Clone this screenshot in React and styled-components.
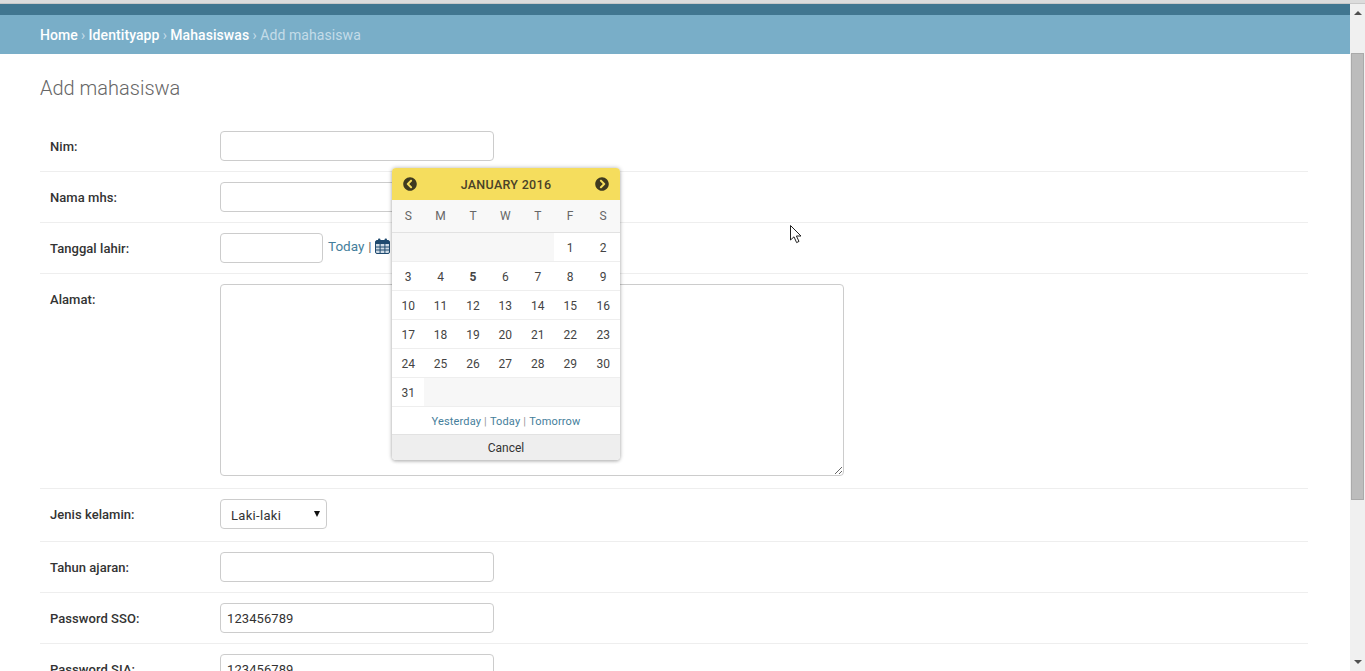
import React from 'react';
import styled, { createGlobalStyle } from 'styled-components';
import { FaChevronCircleLeft, FaChevronCircleRight } from 'react-icons/fa';

const Global = createGlobalStyle`
  html, body { margin: 0; padding: 0; height: 100%; overflow: hidden; }
  body { font-family: Roboto, "Liberation Sans", sans-serif; font-size: 14px; color: #333; background: #fff; }
`;

const Page = styled.div`
  position: relative;
  display: flex;
  flex-direction: column;
  height: 671px;
  overflow: hidden;
`;
const TopEdge = styled.div`
  height: 3px;
  background: #dcdcdc;
  border-bottom: 1px solid #c8c8c8;
  flex: none;
`;
const Body = styled.div`
  display: flex;
  flex: 1;
  min-height: 0;
`;
const Main = styled.div`
  flex: 1;
  min-width: 0;
  overflow: hidden;
`;
const Header = styled.div`
  height: 11px;
  background: #417690;
`;
const Breadcrumbs = styled.div`
  height: 39px;
  padding-left: 40px;
  display: flex;
  align-items: center;
  gap: 3.2px;
  background: #79aec8;
  color: #c4dce8;
  font-size: 14px;
  letter-spacing: 0.08px;
  a { color: #fff; font-weight: 500; text-decoration: none; }
`;
const Content = styled.div`
  padding: 22px 42px 0 40px;
`;
const Title = styled.h1`
  margin: 0 0 21px;
  font-size: 20px;
  line-height: 24px;
  font-weight: 300;
  color: #666;
`;
const Row = styled.div`
  display: flex;
  align-items: flex-start;
  padding: 10px 10px ${p => p.$bottom || 10}px;
  border-bottom: 1px solid #eee;
`;
const Label = styled.label`
  width: 170px;
  flex: none;
  padding-top: 7px;
  font-size: 13px;
  line-height: 18px;
  letter-spacing: 0.05px;
  font-weight: 500;
  color: #333;
`;
const TextInput = styled.input`
  box-sizing: border-box;
  width: ${p => p.$width || 274}px;
  height: 30px;
  padding: 0 6px;
  border: 1px solid #ccc;
  border-radius: 4px;
  background: #fff;
  font: 13px Roboto, sans-serif;
  letter-spacing: 0.07px;
  color: #333;
`;
const Area = styled.textarea`
  box-sizing: border-box;
  display: block;
  width: 624px;
  height: 192px;
  border: 1px solid #ccc;
  border-radius: 4px;
  background: #fff;
`;
const SelectWrap = styled.div`
  position: relative;
  width: 107px;
  height: 30px;
  &::after {
    content: '';
    position: absolute;
    top: 12px;
    right: 7px;
    border-left: 3px solid transparent;
    border-right: 3px solid transparent;
    border-top: 6px solid #111;
  }
`;
const Select = styled.select`
  appearance: none;
  box-sizing: border-box;
  width: 100%;
  height: 30px;
  padding: 2px 0 0 10px;
  border: 1px solid #ccc;
  border-radius: 4px;
  background: #fff;
  font: 13px Roboto, sans-serif;
  letter-spacing: 0.3px;
  color: #333;
`;
const DateLinks = styled.span`
  display: inline-flex;
  align-items: center;
  height: 26px;
  margin-left: 5px;
  font-size: 13.5px;
  color: #666;
  a { color: #447e9b; margin-right: 4px; }
  svg { margin-left: 3px; }
`;
const Field = styled.div`
  display: flex;
  align-items: flex-start;
`;

const Scrollbar = styled.div`
  width: 15px;
  flex: none;
  display: flex;
  flex-direction: column;
  align-items: center;
  background: #f0f0f0;
  box-sizing: border-box;
`;
const Arrow = styled.div`
  flex: none;
  margin: ${p => p.$margin};
  border-left: 4px solid transparent;
  border-right: 4px solid transparent;
  ${p => (p.$down ? 'border-top: 4px solid #505050;' : 'border-bottom: 4px solid #505050;')}
`;
const Thumb = styled.div`
  width: 13px;
  height: 447px;
  margin-top: 38px;
  background: #bcbcbc;
  border: 1px solid #aaa;
  box-sizing: border-box;
`;
const Spacer = styled.div`
  flex: 1;
`;

const Calendar = styled.div`
  position: absolute;
  left: 392px;
  top: 168px;
  width: 228px;
  background: #fff;
  border-radius: 4px;
  box-shadow: 0 0 4px rgba(0, 0, 0, 0.3), 0 2px 3px rgba(0, 0, 0, 0.12);
  overflow: hidden;
`;
const CalHead = styled.div`
  height: 32px;
  padding: 0 11px;
  display: flex;
  align-items: center;
  justify-content: space-between;
  background: #f5dd5d;
  color: #4a4228;
  svg { font-size: 14px; color: #3f3a20; margin-top: -1px; }
`;
const Month = styled.span`
  font-size: 12.5px;
  font-weight: 500;
  letter-spacing: 0.3px;
`;
const Grid = styled.div`
  display: grid;
  grid-template-columns: repeat(6, 32.4px) 1fr;
`;
const Weekdays = styled(Grid)`
  height: 33px;
  background: #f8f8f8;
  border-bottom: 1px solid #e2e2e2;
  box-sizing: border-box;
  align-items: center;
  text-align: center;
  font-size: 12px;
  color: #666;
`;
const Week = styled(Grid)`
  height: 29px;
  border-bottom: 1px solid #eee;
  box-sizing: border-box;
`;
const Day = styled.div`
  display: flex;
  align-items: center;
  justify-content: center;
  padding-top: 1px;
  font-size: 12px;
  color: #444;
  font-weight: ${p => (p.$today ? 700 : 400)};
`;
const Blank = styled.div`
  grid-column: span ${p => p.$span};
  background: #f7f7f7;
`;
const Shortcuts = styled.div`
  height: 27px;
  box-sizing: border-box;
  padding-top: 1px;
  display: flex;
  align-items: center;
  justify-content: center;
  gap: 3px;
  font-size: 11px;
  letter-spacing: 0.15px;
  color: #999;
  a { color: #447e9b; }
`;
const Cancel = styled.div`
  height: 26px;
  display: flex;
  align-items: center;
  justify-content: center;
  background: #eee;
  border-top: 1px solid #e2e2e2;
  box-sizing: border-box;
  font-size: 12px;
  color: #333;
`;
const Pointer = styled.svg`
  position: absolute;
  left: 789px;
  top: 224px;
`;

const weeks = [
  [3, 4, 5, 6, 7, 8, 9],
  [10, 11, 12, 13, 14, 15, 16],
  [17, 18, 19, 20, 21, 22, 23],
  [24, 25, 26, 27, 28, 29, 30],
];

function CalendarIcon() {
  return (
    <svg width="15" height="16" viewBox="0 0 15 16">
      <rect x="0.5" y="2.5" width="14" height="13" rx="1.5" fill="#cfdbe6" stroke="#1f4a6f" />
      <rect x="1" y="3" width="13" height="3" fill="#1f4a6f" />
      <path d="M5.1 6V15M9.9 6V15M1 9H14M1 12H14" stroke="#1f4a6f" fill="none" />
      <rect x="3" y="0.5" width="2.4" height="4" rx="1" fill="#1f4a6f" />
      <rect x="9.6" y="0.5" width="2.4" height="4" rx="1" fill="#1f4a6f" />
    </svg>
  );
}

export default function App() {
  return (
    <Page>
      <Global />
      <TopEdge />
      <Body>
        <Main>
          <Header />
          <Breadcrumbs>
            <a>Home</a> › <a>Identityapp</a> › <a>Mahasiswas</a> › Add mahasiswa
          </Breadcrumbs>
          <Content>
            <Title>Add mahasiswa</Title>
            <Row>
              <Label>Nim:</Label>
              <TextInput />
            </Row>
            <Row>
              <Label>Nama mhs:</Label>
              <TextInput />
            </Row>
            <Row>
              <Label>Tanggal lahir:</Label>
              <Field>
                <TextInput $width={103} />
                <DateLinks>
                  <a>Today</a>|<CalendarIcon />
                </DateLinks>
              </Field>
            </Row>
            <Row $bottom={12}>
              <Label>Alamat:</Label>
              <Area />
            </Row>
            <Row $bottom={12}>
              <Label>Jenis kelamin:</Label>
              <SelectWrap>
                <Select defaultValue="L">
                  <option value="L">Laki-laki</option>
                </Select>
              </SelectWrap>
            </Row>
            <Row>
              <Label>Tahun ajaran:</Label>
              <TextInput />
            </Row>
            <Row>
              <Label>Password SSO:</Label>
              <TextInput defaultValue="123456789" />
            </Row>
            <Row>
              <Label>Password SIA:</Label>
              <TextInput defaultValue="123456789" />
            </Row>
          </Content>
        </Main>
        <Scrollbar>
          <Arrow $margin="7px 0 0" />
          <Thumb />
          <Spacer />
          <Arrow $down $margin="0 0 7px" />
        </Scrollbar>
      </Body>

      <Calendar>
        <CalHead>
          <FaChevronCircleLeft />
          <Month>JANUARY 2016</Month>
          <FaChevronCircleRight />
        </CalHead>
        <Weekdays>
          {['S', 'M', 'T', 'W', 'T', 'F', 'S'].map((d, i) => (
            <span key={i}>{d}</span>
          ))}
        </Weekdays>
        <Week>
          <Blank $span={5} />
          <Day>1</Day>
          <Day>2</Day>
        </Week>
        {weeks.map(w => (
          <Week key={w[0]}>
            {w.map(d => (
              <Day key={d} $today={d === 5}>{d}</Day>
            ))}
          </Week>
        ))}
        <Week>
          <Day>31</Day>
          <Blank $span={6} />
        </Week>
        <Shortcuts>
          <a>Yesterday</a>|<a>Today</a>|<a>Tomorrow</a>
        </Shortcuts>
        <Cancel>Cancel</Cancel>
      </Calendar>

      <Pointer width="14" height="22" viewBox="0 0 14 22">
        <path d="M1.5 1.5 V16 L5 12.8 L7.6 18.6 L10 17.4 L7.4 12 H12 Z" fill="#fff" stroke="#222" strokeWidth="1" />
      </Pointer>
    </Page>
  );
}
